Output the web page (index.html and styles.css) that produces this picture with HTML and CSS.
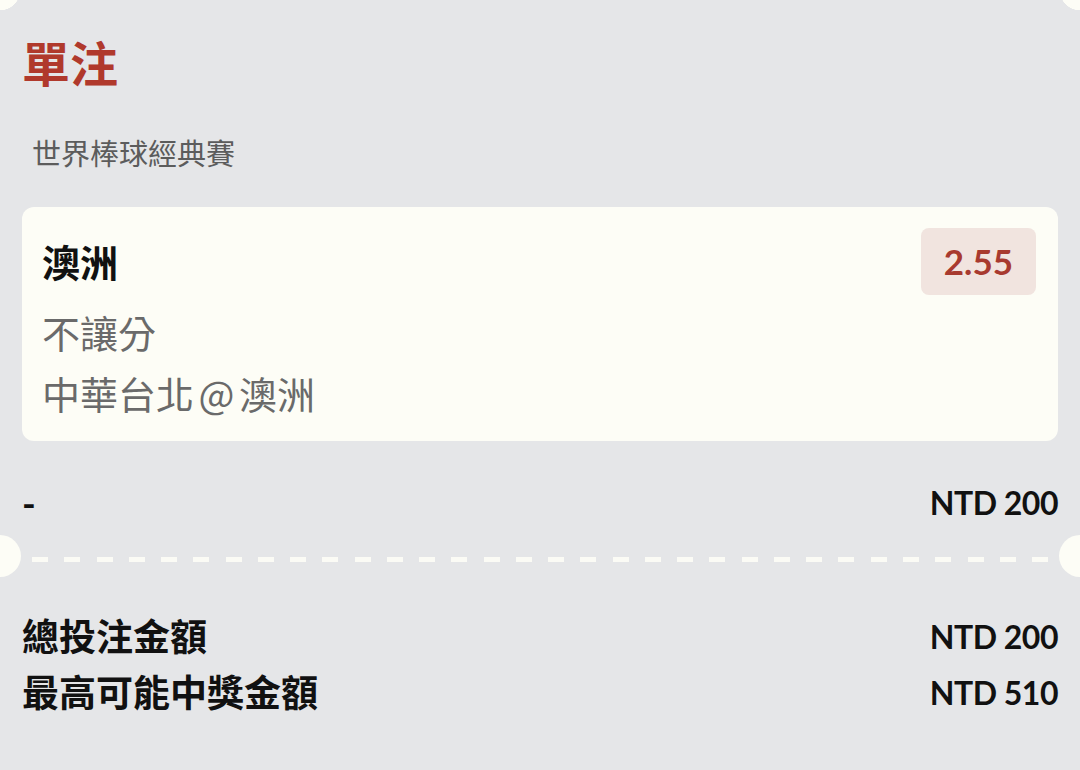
FILE: index.html
```html
<!DOCTYPE html>
<html lang="zh-Hant">
<head>
    <meta charset="UTF-8">
    <meta name="viewport" content="width=device-width, initial-scale=1.0">
    <title>單注</title>
    <link rel="stylesheet" href="styles.css">
</head>
<body>
    <div class="ticket-top"></div>
    <div class="slip">
        <h1 class="slip-title">單注</h1>
        <p class="league">世界棒球經典賽</p>

        <div class="bet-card">
            <div class="bet-head">
                <span class="pick">澳洲</span>
                <span class="odds">2.55</span>
            </div>
            <p class="meta">不讓分</p>
            <p class="meta">中華台北 @ 澳洲</p>
        </div>

        <div class="row stake">
            <span>-</span>
            <span class="amount">NTD 200</span>
        </div>
    </div>

    <div class="divider">
        <span class="notch notch-left"></span>
        <span class="dashes"></span>
        <span class="notch notch-right"></span>
    </div>

    <div class="slip totals">
        <div class="row">
            <span>總投注金額</span>
            <span class="amount">NTD 200</span>
        </div>
        <div class="row">
            <span>最高可能中獎金額</span>
            <span class="amount">NTD 510</span>
        </div>
    </div>
</body>
</html>
```

FILE: styles.css
```css
body {
    margin: 0;
    background: #e5e6e8;
    font-family: Lato, "Noto Sans CJK TC", sans-serif;
    color: #111;
}

/* notches of the ticket above */
.ticket-top {
    height: 10px;
    background:
        radial-gradient(circle at 0 -10px, #fdfdf6 20px, transparent 20.5px),
        radial-gradient(circle at 100% -10px, #fdfdf6 20px, transparent 20.5px);
}

.slip {
    padding: 0 22px;
}

.slip-title {
    margin: 22px 0 0;
    font-size: 48px;
    line-height: 64px;
    font-weight: 700;
    color: #b0392c;
}

.league {
    margin: 38px 0 0;
    padding-left: 10px;
    font-size: 29px;
    line-height: 40px;
    color: #5c5c5c;
}

.bet-card {
    margin-top: 33px;
    background: #fdfdf6;
    border-radius: 12px;
    padding: 21px 22px 18px 20px;
}

.bet-head {
    display: flex;
    justify-content: space-between;
    align-items: center;
}

.pick {
    font-size: 38px;
    font-weight: 700;
    line-height: 50px;
}

.odds {
    background: #f1e4df;
    color: #a83a2f;
    border-radius: 8px;
    font-size: 35px;
    font-weight: 700;
    line-height: 67px;
    padding: 0 23px;
}

.meta {
    margin: 0;
    font-family: "Noto Sans CJK TC", sans-serif;
    font-size: 38px;
    line-height: 61px;
    word-spacing: -4px;
    color: #6a6a6a;
}

.meta:first-of-type {
    margin-top: 6px;
}

.row {
    display: flex;
    justify-content: space-between;
    align-items: center;
    font-size: 37px;
    font-weight: 700;
    line-height: 56px;
}

.stake {
    margin-top: 37px;
    line-height: 50px;
}

.amount {
    font-size: 32px;
    letter-spacing: -0.5px;
}

.divider {
    display: flex;
    align-items: center;
    margin-top: 7px;
    height: 42px;
}

.notch {
    width: 21px;
    height: 42px;
    background: #fdfdf6;
}

.notch-left {
    border-radius: 0 21px 21px 0;
}

.notch-right {
    border-radius: 21px 0 0 21px;
}

.dashes {
    flex: 1;
    margin: 7px 10px 0 11px;
    height: 5px;
    background: repeating-linear-gradient(90deg, #fbfbf5 0 16px, transparent 16px 32.26px);
}

.totals {
    margin-top: 32px;
}
```
